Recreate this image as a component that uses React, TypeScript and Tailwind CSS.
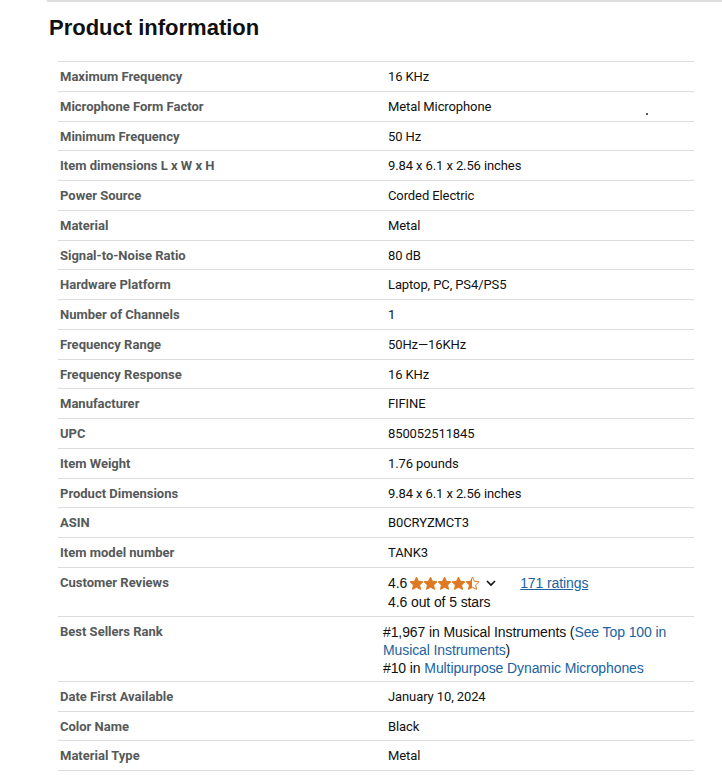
import { FC, ReactNode } from "react";

type TRow = {
  label: string;
  value: ReactNode;
};

const Star: FC<{ fill: "full" | "half" }> = ({ fill }) => (
  <svg width="15" height="15" viewBox="0 0 24 24" className="-mx-[0.5px]">
    <defs>
      <linearGradient id="half-star">
        <stop offset="50%" stopColor="#de7921" />
        <stop offset="50%" stopColor="#ffffff" />
      </linearGradient>
    </defs>
    <path
      d="M12 1.8l3.1 6.6 7.2.9-5.3 5 1.4 7.1L12 17.9l-6.4 3.5 1.4-7.1-5.3-5 7.2-.9z"
      fill={fill === "full" ? "#de7921" : "url(#half-star)"}
      stroke="#de7921"
      strokeWidth="1.6"
      strokeLinejoin="round"
    />
  </svg>
);

const Rating = () => (
  <div className="font-['Liberation_Sans',Arial,sans-serif] text-[14px] leading-[19px] text-[#0f1111]">
    <div className="flex items-center">
      <span>4.6</span>
      <span className="ml-[2px] flex items-center">
        <Star fill="full" />
        <Star fill="full" />
        <Star fill="full" />
        <Star fill="full" />
        <Star fill="half" />
      </span>
      <svg width="12" height="12" viewBox="0 0 12 12" className="ml-[6px]">
        <path d="M2 4l4 4 4-4" fill="none" stroke="#0f1111" strokeWidth="1.6" />
      </svg>
      <a href="#" className="ml-[23px] text-[#2162a1] underline">
        171 ratings
      </a>
    </div>
    <div>4.6 out of 5 stars</div>
  </div>
);

const BestSellers = () => (
  <div className="-ml-[5px] font-['Liberation_Sans',Arial,sans-serif] text-[14px] leading-[18px] text-[#0f1111]">
    <div>
      #1,967 in Musical Instruments (
      <a href="#" className="text-[#2162a1]">
        See Top 100 in
        <br />
        Musical Instruments
      </a>
      )
    </div>
    <div>
      #10 in{" "}
      <a href="#" className="text-[#2162a1]">
        Multipurpose Dynamic Microphones
      </a>
    </div>
  </div>
);

const rows: TRow[] = [
  { label: "Maximum Frequency", value: "16 KHz" },
  { label: "Microphone Form Factor", value: "Metal Microphone" },
  { label: "Minimum Frequency", value: "50 Hz" },
  { label: "Item dimensions L x W x H", value: "9.84 x 6.1 x 2.56 inches" },
  { label: "Power Source", value: "Corded Electric" },
  { label: "Material", value: "Metal" },
  { label: "Signal-to-Noise Ratio", value: "80 dB" },
  { label: "Hardware Platform", value: "Laptop, PC, PS4/PS5" },
  { label: "Number of Channels", value: "1" },
  { label: "Frequency Range", value: "50Hz—16KHz" },
  { label: "Frequency Response", value: "16 KHz" },
  { label: "Manufacturer", value: "FIFINE" },
  { label: "UPC", value: "850052511845" },
  { label: "Item Weight", value: "1.76 pounds" },
  { label: "Product Dimensions", value: "9.84 x 6.1 x 2.56 inches" },
  { label: "ASIN", value: "B0CRYZMCT3" },
  { label: "Item model number", value: "TANK3" },
  { label: "Customer Reviews", value: <Rating /> },
  { label: "Best Sellers Rank", value: <BestSellers /> },
  { label: "Date First Available", value: "January 10, 2024" },
  { label: "Color Name", value: "Black" },
  { label: "Material Type", value: "Metal" },
];

const App: FC = () => {
  return (
    <div className="relative min-h-[775px] w-[722px] bg-white">
      <div className="ml-[47px] border-t-2 border-[#dddddd]"></div>

      <h2 className="ml-[49px] mt-[12px] font-['Liberation_Sans',Arial,sans-serif] text-[22px] font-bold leading-[28px] text-[#0f1111]">
        Product information
      </h2>

      <div className="ml-[58px] mt-[19px] w-[636px] border-b border-[#dddddd]">
        {rows.map((row) => (
          <div key={row.label} className="flex border-t border-[#dddddd] pb-[4px] pt-[6px]">
            <div className="w-[328px] pl-[2px] font-['Roboto',Arial,sans-serif] text-[13px] font-bold leading-[18.75px] text-[#565959]">
              {row.label}
            </div>
            <div className="flex-1 pl-[2px] font-['Roboto',Arial,sans-serif] text-[13px] leading-[18.75px] tracking-[-0.1px] text-[#0f1111]">
              {row.value}
            </div>
          </div>
        ))}
      </div>

      <span className="absolute left-[646px] top-[113px] h-[2px] w-[2px] bg-[#555555]"></span>
    </div>
  );
};

export default App;
